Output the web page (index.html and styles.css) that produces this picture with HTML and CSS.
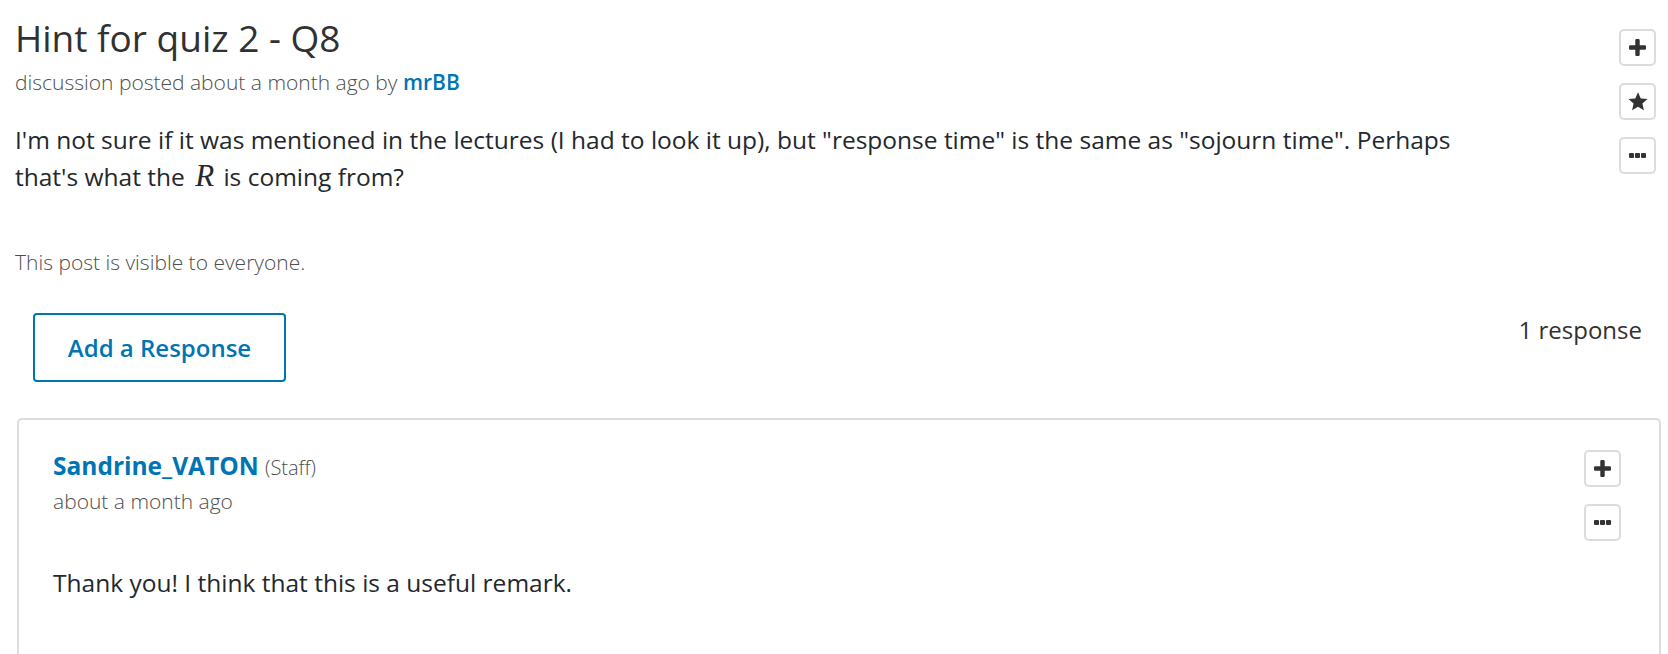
FILE: index.html
```html
<!DOCTYPE html>
<html>
<head>
<meta charset="utf-8">
<link rel="stylesheet" href="styles.css">
</head>
<body>
<div class="page">
  <div class="post">
    <div class="post-main">
      <h1 class="title">Hint for quiz 2 - Q8</h1>
      <div class="meta">discussion posted about a month ago by <a class="user">mrBB</a></div>
      <p class="body">I'm not sure if it was mentioned in the lectures (I had to look it up), but "response time" is the same as "sojourn time". Perhaps that's what the <span class="math">R</span> is coming from?</p>
      <div class="visibility">This post is visible to everyone.</div>
    </div>
    <div class="actions">
      <button class="icon-btn" aria-label="Follow">
        <svg width="17" height="17" viewBox="0 0 17 17"><path d="M6.3 1.2Q6.3 0 7.5 0h2Q10.7 0 10.7 1.2v5.1h5.1Q17 6.3 17 7.5v2q0 1.2-1.2 1.2h-5.1v5.1Q10.7 17 9.5 17h-2Q6.3 17 6.3 15.8v-5.1H1.2Q0 10.7 0 9.5v-2Q0 6.3 1.2 6.3h5.1z" fill="#333"/></svg>
      </button>
      <button class="icon-btn" aria-label="Vote">
        <svg width="20" height="19" viewBox="0 0 20 19"><path d="M10 0.3l2.75 6.1 6.75.6-5.1 4.5 1.5 6.7L10 14.7l-5.9 3.5 1.5-6.7L.5 7l6.75-.6z" fill="#333"/></svg>
      </button>
      <button class="icon-btn" aria-label="More">
        <svg width="17" height="5" viewBox="0 0 17 5"><rect x="0" y="0" width="5" height="5" rx="1" fill="#333"/><rect x="6" y="0" width="5" height="5" rx="1" fill="#333"/><rect x="12" y="0" width="5" height="5" rx="1" fill="#333"/></svg>
      </button>
    </div>
  </div>

  <div class="response-bar">
    <button class="add-response">Add a Response</button>
    <div class="count">1 response</div>
  </div>

  <div class="card">
    <div class="card-head">
      <div class="author-block">
        <div class="author"><a class="user strong">Sandrine_VATON</a> <span class="role">(Staff)</span></div>
        <div class="time">about a month ago</div>
      </div>
      <div class="actions card-actions">
        <button class="icon-btn" aria-label="Follow">
          <svg width="17" height="17" viewBox="0 0 17 17"><path d="M6.3 1.2Q6.3 0 7.5 0h2Q10.7 0 10.7 1.2v5.1h5.1Q17 6.3 17 7.5v2q0 1.2-1.2 1.2h-5.1v5.1Q10.7 17 9.5 17h-2Q6.3 17 6.3 15.8v-5.1H1.2Q0 10.7 0 9.5v-2Q0 6.3 1.2 6.3h5.1z" fill="#333"/></svg>
        </button>
        <button class="icon-btn" aria-label="More">
          <svg width="17" height="5" viewBox="0 0 17 5"><rect x="0" y="0" width="5" height="5" rx="1" fill="#333"/><rect x="6" y="0" width="5" height="5" rx="1" fill="#333"/><rect x="12" y="0" width="5" height="5" rx="1" fill="#333"/></svg>
        </button>
      </div>
    </div>
    <p class="body reply">Thank you! I think that this is a useful remark.</p>
  </div>
</div>
</body>
</html>
```

FILE: styles.css
```css
* { box-sizing: border-box; }
html, body { margin: 0; padding: 0; background: #fff; }
body {
  font-family: "Open Sans", "Liberation Sans", sans-serif;
  color: #23282d;
  overflow: hidden;
}
.page {
  padding: 16px 7px 0 15px;
}
.post {
  display: flex;
  justify-content: space-between;
  align-items: flex-start;
}
.post-main { flex: 1; }
.title {
  margin: 0;
  font-size: 37px;
  line-height: 43px;
  font-weight: 400;
  color: #313131;
}
.meta {
  margin-top: 9px;
  font-size: 21px;
  line-height: 28px;
  font-weight: 300;
  color: #4e4e4e;
}
.user {
  color: #0075b4;
  font-weight: 600;
  text-decoration: none;
}
.body {
  margin: 25px 0 0;
  font-size: 24.5px;
  line-height: 37px;
  color: #23282d;
  max-width: 1470px;
}
.math {
  display: inline-block;
  font-family: "Liberation Serif", "DejaVu Serif", serif;
  font-style: italic;
  font-size: 31px;
  line-height: 30px;
  margin: 0 3px 0 4px;
}
.visibility {
  margin-top: 55px;
  font-size: 21px;
  line-height: 25px;
  font-weight: 300;
  color: #4e4e4e;
}
.actions {
  display: flex;
  flex-direction: column;
  gap: 17px;
  padding-top: 13px;
  margin-right: 5px;
}
.icon-btn {
  width: 37px;
  height: 37px;
  padding: 0;
  display: flex;
  align-items: center;
  justify-content: center;
  background: #fff;
  border: 2px solid #dcdcdc;
  border-radius: 5px;
}
.response-bar {
  display: flex;
  justify-content: space-between;
  align-items: flex-start;
  margin-top: 38px;
  padding: 0 19px 0 18px;
}
.add-response {
  width: 253px;
  height: 69px;
  background: #fff;
  border: 2px solid #0075b4;
  border-radius: 4px;
  color: #0075b4;
  font-family: "Open Sans", "Liberation Sans", sans-serif;
  font-size: 24px;
  font-weight: 600;
  padding: 0;
}
.count {
  font-size: 24px;
  line-height: 32px;
  color: #313131;
  margin-top: 1px;
}
.card {
  margin: 36px 0 0 2px;
  border: 2px solid #dddddd;
  border-bottom: none;
  border-radius: 5px 5px 0 0;
  padding: 30px 38px 60px 34px;
  height: 260px;
}
.card-head {
  display: flex;
  justify-content: space-between;
  align-items: flex-start;
}
.author {
  font-size: 24.5px;
  line-height: 32px;
}
.user.strong { font-weight: 700; }
.role {
  font-size: 20px;
  font-weight: 300;
  color: #4e4e4e;
}
.time {
  margin-top: 3px;
  font-size: 21px;
  line-height: 28px;
  font-weight: 300;
  color: #4e4e4e;
}
.card-actions {
  padding-top: 0;
  margin-right: 0;
}
.body.reply {
  margin-top: 23px;
}
```
